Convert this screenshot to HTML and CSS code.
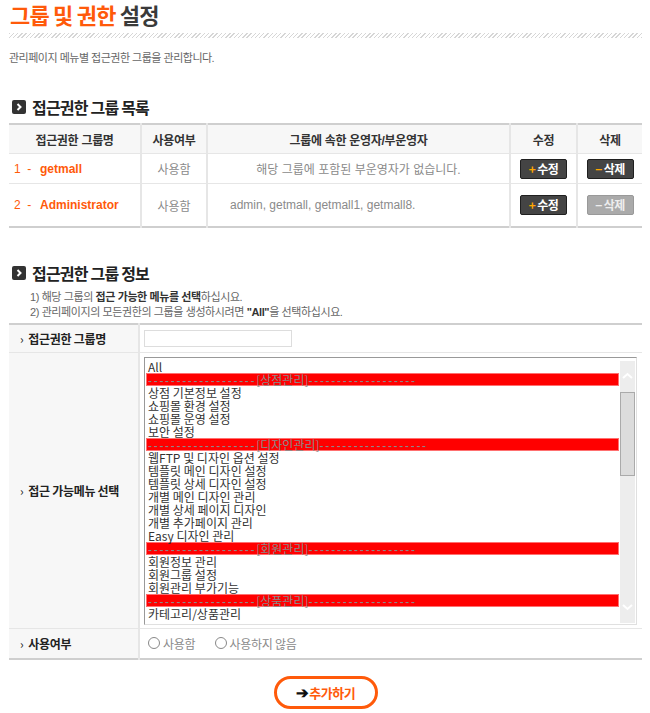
FILE: index.html
```html
<!DOCTYPE html>
<html>
<head>
  <title>그룹 및 권한 설정</title>
  <link rel="stylesheet" href="styles.css">
</head>
<body>

<div class="wrap">
  <h1 class="page-title"><span class="point">그룹 및 권한</span> 설정</h1>
  <div class="hatch"></div>
  <p class="desc">관리페이지 메뉴별 접근권한 그룹을 관리합니다.</p>

  <!-- 접근권한 그룹 목록 -->
  <h2 class="sub-title">
    <span class="ico"><svg width="14" height="14" viewBox="0 0 14 14"><rect x="0" y="0" width="14" height="14" rx="2" fill="#333"/><polyline points="5.5,4 8.5,7 5.5,10" fill="none" stroke="#fff" stroke-width="2"/></svg></span>
    접근권한 그룹 목록
  </h2>
  <table class="list">
    <colgroup>
      <col style="width:132px"><col style="width:66px"><col style="width:303px"><col style="width:67px"><col style="width:65px">
    </colgroup>
    <thead>
      <tr>
        <th>접근권한 그룹명</th>
        <th>사용여부</th>
        <th>그룹에 속한 운영자/부운영자</th>
        <th>수정</th>
        <th>삭제</th>
      </tr>
    </thead>
    <tbody>
      <tr class="row-short">
        <td class="gname">1 &nbsp;-&nbsp; <b>getmall</b></td>
        <td class="gray">사용함</td>
        <td class="gray">해당 그룹에 포함된 부운영자가 없습니다.</td>
        <td><span class="btn"><em>+</em>수정</span></td>
        <td><span class="btn"><em>−</em>삭제</span></td>
      </tr>
      <tr class="row-tall">
        <td class="gname">2 &nbsp;-&nbsp; <b>Administrator</b></td>
        <td class="gray">사용함</td>
        <td class="gray members">admin, getmall, getmall1, getmall8.</td>
        <td><span class="btn"><em>+</em>수정</span></td>
        <td><span class="btn off"><em>−</em>삭제</span></td>
      </tr>
    </tbody>
  </table>

  <!-- 접근권한 그룹 정보 -->
  <h2 class="sub-title sec2">
    <span class="ico"><svg width="14" height="14" viewBox="0 0 14 14"><rect x="0" y="0" width="14" height="14" rx="2" fill="#333"/><polyline points="5.5,4 8.5,7 5.5,10" fill="none" stroke="#fff" stroke-width="2"/></svg></span>
    접근권한 그룹 정보
  </h2>
  <div class="notes">
    <p class="note">1) 해당 그룹의 <b>접근 가능한 메뉴를 선택</b>하십시요.</p>
    <p class="note">2) 관리페이지의 모든권한의 그룹을 생성하시려면 <b>"All"</b>을 선택하십시요.</p>
  </div>

  <table class="form">
    <tr class="f-name">
      <th><i>›</i>접근권한 그룹명</th>
      <td><input type="text" class="inp"></td>
    </tr>
    <tr class="f-menu">
      <th><i>›</i>접근 가능메뉴 선택</th>
      <td>
        <div class="menu-box">
          <ul class="menu-list">
            <li>All</li>
            <li class="cat"><span class="dash">-------------------</span>[상점관리]<span class="dash">-------------------</span></li>
            <li>상점 기본정보 설정</li>
            <li>쇼핑몰 환경 설정</li>
            <li>쇼핑몰 운영 설정</li>
            <li>보안 설정</li>
            <li class="cat"><span class="dash">-------------------</span>[디자인관리]<span class="dash">-------------------</span></li>
            <li>웹FTP 및 디자인 옵션 설정</li>
            <li>템플릿 메인 디자인 설정</li>
            <li>템플릿 상세 디자인 설정</li>
            <li>개별 메인 디자인 관리</li>
            <li>개별 상세 페이지 디자인</li>
            <li>개별 추가페이지 관리</li>
            <li>Easy 디자인 관리</li>
            <li class="cat"><span class="dash">-------------------</span>[회원관리]<span class="dash">-------------------</span></li>
            <li>회원정보 관리</li>
            <li>회원그룹 설정</li>
            <li>회원관리 부가기능</li>
            <li class="cat"><span class="dash">-------------------</span>[상품관리]<span class="dash">-------------------</span></li>
            <li>카테고리/상품관리</li>
          </ul>
          <div class="scroll">
            <span class="arrow"><svg width="15" height="12" viewBox="0 0 15 12"><polyline points="3,8 7.5,4 12,8" fill="none" stroke="#fff" stroke-width="2"/></svg></span>
            <span class="thumb"></span>
            <span class="track"></span>
            <span class="arrow"><svg width="15" height="12" viewBox="0 0 15 12"><polyline points="3,4 7.5,8 12,4" fill="none" stroke="#fff" stroke-width="2"/></svg></span>
          </div>
        </div>
      </td>
    </tr>
    <tr class="f-use">
      <th><i>›</i>사용여부</th>
      <td>
        <label class="radio"><input type="radio" name="use">사용함</label>
        <label class="radio"><input type="radio" name="use">사용하지 않음</label>
      </td>
    </tr>
  </table>

  <div class="btn-area">
    <button class="btn-add"><span class="arr">➔</span>추가하기</button>
  </div>
</div>

</body>
</html>
```

FILE: styles.css
```css
body {
  margin: 0;
  font-family: "Liberation Sans", "Noto Sans CJK KR", sans-serif;
  color: #333;
  background-color: #FFF;
}
.wrap {
  width: 633px;
  padding-left: 9px;
}
.page-title {
  margin: 0;
  padding-left: 1px;
  font-family: "Noto Sans CJK KR", sans-serif;
  font-size: 22px;
  line-height: 28px;
  letter-spacing: -0.8px;
  color: #3a3a3a;
}
.page-title .point {
  color: #ff5a0a;
}
.hatch {
  height: 5px;
  margin-top: 5px;
  background: repeating-linear-gradient(135deg, #d6d6d6 0 1px, #fff 1px 3px);
}
.desc {
  margin: 13px 0 0;
  font-size: 11px;
  line-height: 14px;
  letter-spacing: -0.5px;
  color: #666;
}
.sub-title {
  margin: 32px 0 0;
  display: flex;
  align-items: center;
  gap: 6px;
  padding-left: 3px;
  font-family: "Noto Sans CJK KR", sans-serif;
  font-size: 16px;
  line-height: 20px;
  letter-spacing: -0.8px;
  color: #222;
}
.sub-title .ico {
  display: flex;
}
.sub-title.sec2 {
  margin-top: 35px;
}

/* 그룹 목록 */
.list {
  width: 633px;
  margin-top: 6px;
  border-collapse: collapse;
  table-layout: fixed;
  border-top: 2px solid #cfcfcf;
  border-bottom: 2px solid #cfcfcf;
  font-size: 12px;
}
.list th {
  height: 28px;
  padding: 0;
  background-color: #f7f7f7;
  font-weight: bold;
  letter-spacing: -0.3px;
  color: #333;
  border-left: 2px solid #e6e6e6;
  border-bottom: 1px solid #e6e6e6;
}
.list td {
  padding: 0;
  text-align: center;
  border-left: 2px solid #e6e6e6;
  border-bottom: 1px solid #e6e6e6;
}
.list th:first-child, .list td:first-child {
  border-left: none;
}
.list .row-short td {
  height: 29px;
}
.list .row-tall td {
  height: 42px;
  border-bottom: none;
}
.list .gname {
  text-align: left;
  padding-left: 5px;
  color: #ff5a0a;
}
.list .gname b {
  margin-left: 2px;
}
.gray {
  color: #8a8a8a;
}
.list .members {
  text-align: left;
  padding-left: 22px;
}
.btn {
  display: inline-block;
  width: 45px;
  height: 18px;
  line-height: 18px;
  border: 1px solid #1f1f1f;
  border-radius: 2px;
  background-color: #444;
  color: #FFF;
  font-family: "Noto Sans CJK KR", sans-serif;
  font-size: 12px;
  font-weight: bold;
  letter-spacing: -0.5px;
  text-align: center;
  vertical-align: middle;
}
.btn em {
  font-style: normal;
  color: #ffa800;
  margin-right: 2px;
}
.btn.off {
  background-color: #aaa;
  border-color: #999;
  color: #eee;
}
.btn.off em {
  color: #eee;
}

/* 그룹 정보 */
.notes {
  margin-top: 7px;
}
.note {
  margin: 0;
  padding-left: 21px;
  font-size: 11px;
  line-height: 15px;
  letter-spacing: -0.4px;
  color: #666;
}
.note b {
  color: #333;
}
.form {
  width: 633px;
  margin-top: 3px;
  border-collapse: collapse;
  table-layout: fixed;
  border-top: 2px solid #cfcfcf;
  border-bottom: 2px solid #cfcfcf;
  font-size: 12px;
}
.form th {
  width: 118px;
  padding: 0 0 0 11px;
  text-align: left;
  background-color: #f7f7f7;
  font-family: "Noto Sans CJK KR", sans-serif;
  font-weight: bold;
  color: #222;
  letter-spacing: -0.3px;
  border-right: 2px solid #e6e6e6;
  border-bottom: 1px solid #e6e6e6;
}
.form th i {
  font-style: normal;
  font-weight: normal;
  margin-right: 5px;
}
.form td {
  padding: 0 0 0 4px;
  border-bottom: 1px solid #e6e6e6;
}
.form tr:last-child th, .form tr:last-child td {
  border-bottom: none;
}
.f-name th, .f-name td {
  height: 27px;
}
.f-menu th, .f-menu td {
  height: 275px;
}
.f-use th, .f-use td {
  height: 29px;
}
.inp {
  display: block;
  width: 146px;
  height: 15px;
  margin: 0;
  padding: 0;
  border: 1px solid #ddd;
}
.menu-box {
  display: flex;
  width: 491px;
  height: 266px;
  border: 1px solid;
  border-color: #999 #e0e0e0 #e0e0e0 #999;
}
.menu-list {
  flex: 1;
  margin: 0;
  padding: 2px 1px 0;
  list-style: none;
  overflow: hidden;
  font-family: "Noto Sans CJK KR", sans-serif;
  font-size: 12px;
  line-height: 13px;
  color: #333;
}
.menu-list li {
  height: 13px;
  padding-left: 2px;
  white-space: nowrap;
}
.menu-list .cat {
  background-color: #ff0000;
  color: #8a8a8a;
  box-shadow: inset 0 0 0 1px #ff7070;
}
.menu-list .dash {
  font-family: "Liberation Sans", sans-serif;
  letter-spacing: 1.7px;
}
.scroll {
  width: 15px;
  margin: 3px 1px 1px 0;
  display: flex;
  flex-direction: column;
  background-color: #ededed;
}
.scroll .arrow {
  display: flex;
  height: 31px;
  align-items: center;
}
.scroll .thumb {
  height: 84px;
  background-color: #dcdcdc;
  border: 1px solid #aaa;
  box-sizing: border-box;
}
.scroll .track {
  flex: 1;
}
.radio {
  display: inline-flex;
  align-items: center;
  margin-right: 12px;
  font-family: "Noto Sans CJK KR", sans-serif;
  color: #8a8a8a;
  letter-spacing: -0.3px;
}
.radio input {
  -webkit-appearance: none;
  appearance: none;
  width: 12px;
  height: 12px;
  margin: 0 3px 0 4px;
  border: 1px solid #888;
  border-radius: 50%;
  background: #fff;
}
.btn-area {
  margin-top: 16px;
  text-align: center;
}
.btn-add {
  width: 104px;
  height: 33px;
  padding: 0 0 2px;
  border: 3px solid #ff5a0a;
  border-radius: 17px;
  background-color: #FFF;
  color: #ff5a0a;
  font-family: "Noto Sans CJK KR", sans-serif;
  font-size: 13px;
  font-weight: bold;
  letter-spacing: -0.5px;
}
.btn-add .arr {
  color: #111;
  font-size: 15px;
  margin-right: 1px;
}
```
